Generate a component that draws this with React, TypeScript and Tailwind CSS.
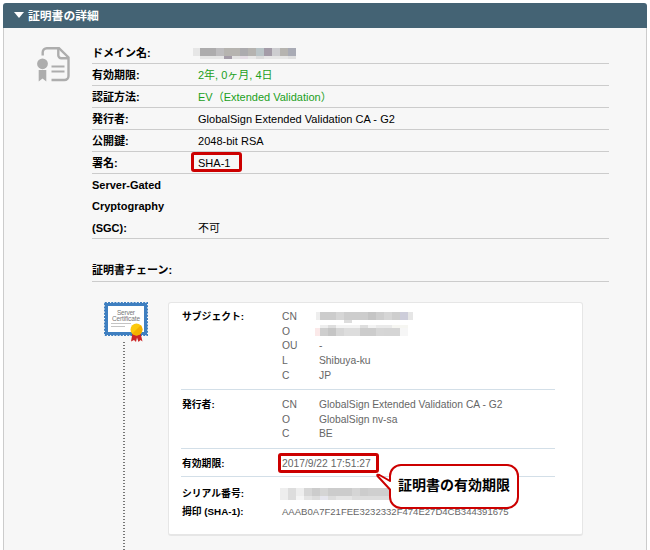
import type { ReactNode } from "react";

type Block = [x: number, y: number, w: number, h: number, fill: string];

// Pixelated strips that hide private values
const domainBlocks: Block[] = [
  [0, 0, 7, 8, "#e6e6e6"], [7, 0, 16, 8, "#adacad"], [23, 0, 8, 8, "#bdbcbe"], [31, 0, 16, 8, "#b6b4b0"],
  [47, 0, 8, 8, "#acabae"], [55, 0, 8, 8, "#b5b3b0"], [63, 0, 8, 8, "#bac4c7"], [71, 0, 8, 8, "#a49ca8"],
  [79, 0, 8, 8, "#cdcdd0"], [87, 0, 8, 8, "#b6b4b0"], [95, 0, 8, 8, "#a9abb5"],
  [7, 8, 24, 3, "#e6e6e6"], [31, 8, 8, 3, "#a49ca8"], [39, 8, 8, 3, "#e3e3e3"], [47, 8, 8, 3, "#e5dde5"],
  [55, 8, 8, 3, "#e9e9e9"], [63, 8, 8, 3, "#dcdcdc"], [71, 8, 24, 3, "#e6e6e6"], [95, 8, 8, 3, "#dfdfdf"],
];
const commonNameBlocks: Block[] = [
  [0, 0, 4, 8, "#eeeeee"], [4, 0, 16, 8, "#cccccc"], [20, 0, 8, 8, "#d6d6d6"], [28, 0, 24, 8, "#cdcdcd"],
  [52, 0, 8, 8, "#c5c5c5"], [60, 0, 8, 8, "#cecece"], [68, 0, 8, 8, "#d6d6d6"], [76, 0, 8, 8, "#cecece"],
  [84, 0, 8, 8, "#cdcdda"], [92, 0, 5, 8, "#e6e6e6"], [28, 8, 8, 3, "#dddddd"],
];
const orgBlocks: Block[] = [
  [0, 3, 5, 8, "#fbe9e9"], [5, 0, 8, 3, "#eeeeee"], [13, 0, 8, 3, "#dedede"], [21, 0, 24, 3, "#f3f3f3"],
  [45, 0, 8, 3, "#dedede"], [53, 0, 8, 3, "#f3f3f3"], [61, 0, 16, 3, "#eaeaea"], [77, 0, 16, 3, "#f6f6f2"],
  [5, 3, 8, 8, "#cecece"], [13, 3, 8, 8, "#c5c5c5"], [21, 3, 8, 8, "#d6d6d6"], [29, 3, 16, 8, "#dddddd"],
  [45, 3, 16, 8, "#cccccc"], [61, 3, 8, 8, "#d6d6d6"], [69, 3, 16, 8, "#d5d5d5"], [85, 3, 8, 8, "#f6f6f6"],
];
const serialBlocks: Block[] = [
  [0, 0, 8, 12, "#eeeeee"], [8, 0, 8, 12, "#dddddd"], [16, 0, 8, 8, "#eeeeee"], [24, 0, 8, 8, "#d6d6d6"],
  [32, 0, 8, 8, "#cccccc"], [40, 0, 8, 8, "#d5d5d5"], [48, 0, 24, 8, "#cccccc"], [72, 0, 8, 8, "#d5d5d5"],
  [80, 0, 8, 8, "#cccccc"], [88, 0, 32, 8, "#cfcfcf"], [16, 8, 8, 4, "#f5f5f5"], [24, 8, 8, 4, "#e4e4e4"],
  [32, 8, 8, 4, "#dddddd"], [40, 8, 8, 4, "#e6e6ee"], [48, 8, 8, 4, "#dddddd"], [56, 8, 16, 4, "#e5e5e5"],
  [72, 8, 48, 4, "#dddddd"],
];

function Mosaic({ blocks, width, height }: { blocks: Block[]; width: number; height: number }) {
  return (
    <svg width={width} height={height} shapeRendering="crispEdges" className="shrink-0">
      {blocks.map(([x, y, w, h, fill], i) => (
        <rect key={i} x={x} y={y} width={w} height={h} fill={fill} />
      ))}
    </svg>
  );
}

function DocumentIcon() {
  return (
    <svg width="34" height="36" viewBox="0 0 34 36" fill="none" stroke="#adadad" strokeWidth="2.400">
      <path d="M6.700 8.500V5.200a4 4 0 0 1 4-4H23L32.500 10.500V29a4 4 0 0 1-4 4H15.500" />
      <path d="M22.300 1.500v6.700a3 3 0 0 0 3 3H32" />
      <path d="M15.500 19.500h13M15.500 24.500h13" strokeWidth="2" />
      <circle cx="6.500" cy="16.800" r="5.400" fill="#adadad" stroke="none" />
      <path d="M2.700 23h7.600v11.500L6.500 31.500l-3.800 3z" fill="#adadad" stroke="none" />
    </svg>
  );
}

function CertificateIcon() {
  return (
    <svg width="44" height="41" viewBox="0 0 44 41">
      <rect x="2.500" y="2.500" width="39" height="29" fill="#fff" stroke="#3f7fc0" strokeWidth="3" />
      <rect x=".8" y=".8" width="42.400" height="32.400" fill="none" stroke="#3f7fc0" strokeWidth="1.600" strokeDasharray="2 1.200" />
      <text x="22" y="12.800" textAnchor="middle" textLength="18" fontSize="6.500" fill="#777" fontFamily="Liberation Sans, sans-serif">Server</text>
      <text x="22" y="18.600" textAnchor="middle" textLength="28" fontSize="6.500" fill="#777" fontFamily="Liberation Sans, sans-serif">Certificate</text>
      <path d="M7 21.500h20M7 24.500h14" stroke="#c4c4c4" />
      <path d="M28.500 31l-1.500 8.500 3-1.500 2 2 1-4.500 1.500 4.500 2-2 2 1.500-2-8.500z" fill="#cc2525" />
      <circle cx="32.500" cy="27.500" r="6" fill="#fcc90c" />
      <path d="M28.200 31.700a6 6 0 0 0 8.500-8.500z" fill="#f3b000" />
    </svg>
  );
}

function DetailRow({ label, children, green = false }: { label: string; children: ReactNode; green?: boolean }) {
  return (
    <div className="flex h-[22px] items-center border-b border-[#cccccc] pt-0.5">
      <div className="w-[106px] shrink-0 font-bold">{label}</div>
      <div className={green ? "text-[#1ba01b]" : "tracking-[0.02px]"}>{children}</div>
    </div>
  );
}

function Field({ name, children }: { name: string; children: ReactNode }) {
  return (
    <div className="flex h-[14.7px] items-center">
      <span className="w-[37px] shrink-0">{name}</span>
      {children}
    </div>
  );
}

function CardLabel({ children }: { children: ReactNode }) {
  return <div className="w-[100px] shrink-0 pl-px text-[9.8px] font-bold text-black">{children}</div>;
}

export default function App() {
  return (
    <div className="h-[550px] w-[650px] overflow-hidden bg-white px-[3px] pt-[3px] font-['Liberation_Sans','Noto_Sans_CJK_JP',sans-serif] text-[11px] leading-[15px] text-black">
      {/* Header */}
      <div className="flex h-[25px] items-center gap-[4px] rounded-t-[3px] bg-[#446374] pl-[11px] text-[11.8px] font-bold text-white">
        <svg width="10" height="6" viewBox="0 0 10 6" className="-mt-0.5">
          <path d="M0 0h10L5 6z" fill="#fff" />
        </svg>
        <span className="pt-0.5">証明書の詳細</span>
      </div>

      <div className="relative h-[522px] border-x border-[#cccccc] bg-[#f7f7f7] pl-[88px] pr-[37px] pt-[14px]">
        <div className="absolute left-[32px] top-[19px]">
          <DocumentIcon />
        </div>

        {/* Details */}
        <DetailRow label="ドメイン名:">
          <div className="-ml-[5px]">
            <Mosaic blocks={domainBlocks} width={103} height={11} />
          </div>
        </DetailRow>
        <DetailRow label="有効期限:" green>2年, 0ヶ月, 4日</DetailRow>
        <DetailRow label="認証方法:" green>EV（Extended Validation）</DetailRow>
        <DetailRow label="発行者:">GlobalSign Extended Validation CA - G2</DetailRow>
        <DetailRow label="公開鍵:">2048-bit RSA</DetailRow>
        <DetailRow label="署名:">
          <span className="relative">
            SHA-1
            <span className="absolute -left-[7px] -top-[5px] h-5 w-[51px] rounded-[3px] border-3 border-[#cc0000]" />
          </span>
        </DetailRow>
        <div className="flex h-[65px] items-end border-b border-[#cccccc] leading-[21.5px]">
          <div className="-mb-px w-[106px] shrink-0 font-bold">
            Server-Gated
            <br />
            Cryptography
            <br />
            (SGC):
          </div>
          <div className="-mb-px">不可</div>
        </div>

        <div className="mt-[21px] flex h-[22px] items-center border-b border-[#cccccc] font-bold">証明書チェーン:</div>

        {/* Certificate chain */}
        <div className="mt-[20px] flex">
          <div className="flex w-[76px] shrink-0 flex-col items-start pl-[12px]">
            <CertificateIcon />
            <div className="-mt-px ml-[19px] h-[220px] w-[2px] bg-[repeating-linear-gradient(to_bottom,#777_0_1.500px,#f7f7f7_1.500px_3px)]" />
          </div>

          <div className="h-[234px] w-[415px] shrink-0 rounded-[3px] border border-b-2 border-[#e6e6e6] bg-white pl-[12px] pr-[27px] text-[10.3px] text-[#666666]">
            <div className="flex h-[87px] border-b border-[#d3dfe8] pt-[6px]">
              <CardLabel>サブジェクト:</CardLabel>
              <div className="pl-px">
                <Field name="CN">
                  <div className="-ml-[3px] pt-0.5">
                    <Mosaic blocks={commonNameBlocks} width={97} height={11} />
                  </div>
                </Field>
                <Field name="O">
                  <div className="-ml-[4px] -mt-0.5">
                    <Mosaic blocks={orgBlocks} width={93} height={11} />
                  </div>
                </Field>
                <Field name="OU">-</Field>
                <Field name="L">Shibuya-ku</Field>
                <Field name="C">JP</Field>
              </div>
            </div>
            <div className="flex h-[59px] border-b border-[#d3dfe8] pt-[7px]">
              <CardLabel>発行者:</CardLabel>
              <div className="pl-px">
                <Field name="CN">GlobalSign Extended Validation CA - G2</Field>
                <Field name="O">GlobalSign nv-sa</Field>
                <Field name="C">BE</Field>
              </div>
            </div>
            <div className="flex h-[28px] items-center border-b border-[#d3dfe8] pt-0.5">
              <CardLabel>有効期限:</CardLabel>
              <div className="relative pl-px">
                2017/9/22 17:51:27
                <span className="absolute -left-[3px] -top-[3px] h-5 w-[101px] rounded-[3px] border-3 border-[#cc0000]" />
              </div>
            </div>
            <div className="mt-2 flex h-[17px] items-center">
              <CardLabel>シリアル番号:</CardLabel>
              <div className="-ml-px pt-px">
                <Mosaic blocks={serialBlocks} width={120} height={12} />
              </div>
            </div>
            <div className="flex h-[18px] items-center">
              <CardLabel>拇印 (SHA-1):</CardLabel>
              <div className="pl-px text-[9.55px]">AAAB0A7F21FEE3232332F474E27D4CB344391675</div>
            </div>
          </div>
        </div>

        {/* Callout */}
        <div className="absolute left-[372px] top-[435px] h-[48px] w-[146px]">
          <svg width="146" height="48" viewBox="0 0 146 48" className="absolute inset-0">
            <path
              d="M25 2h106a11 11 0 0 1 11 11v21a11 11 0 0 1-11 11H25a11 11 0 0 1-11-11V26.500L1.500 13q-1-2 2-1L14 18v-5A11 11 0 0 1 25 2z"
              fill="#fff"
              stroke="#cc0000"
              strokeWidth="2"
              strokeLinejoin="round"
            />
          </svg>
          <div className="relative pl-[22px] pt-[12px] text-[14px] font-bold leading-5">証明書の有効期限</div>
        </div>
      </div>
    </div>
  );
}
